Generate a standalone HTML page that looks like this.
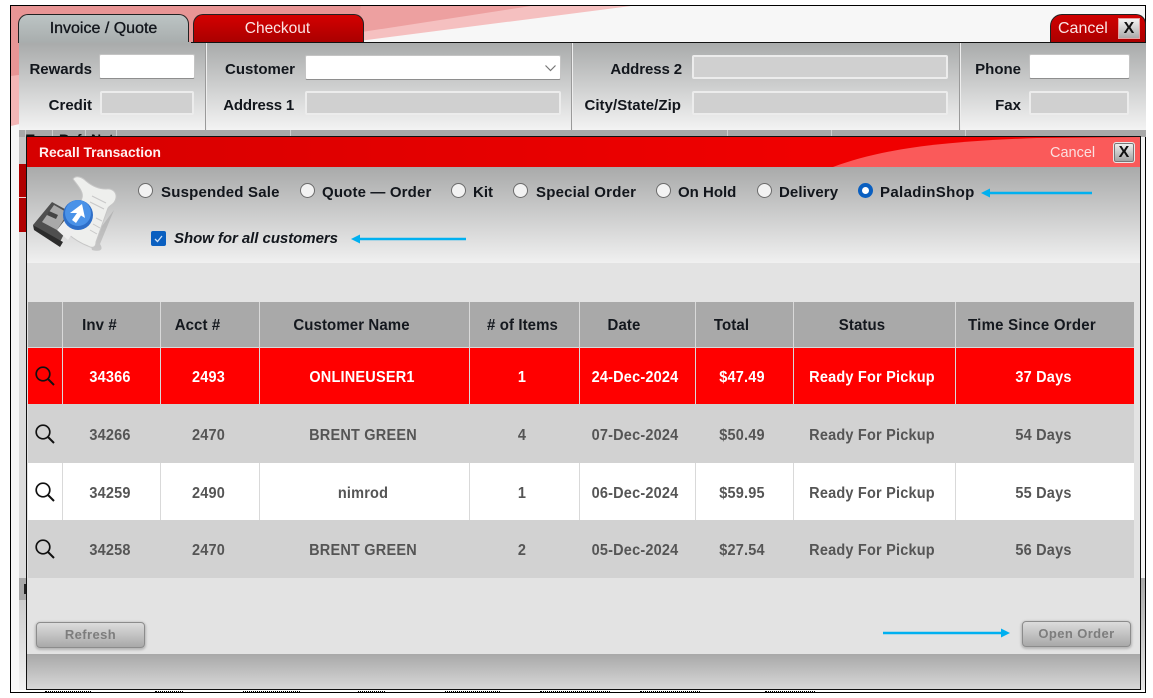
<!DOCTYPE html>
<html>
<head>
<meta charset="utf-8">
<style>
html,body{margin:0;padding:0;width:1153px;height:698px;overflow:hidden;background:#fff;}
*{box-sizing:border-box;}
body{font-family:"Liberation Sans",Arial,sans-serif;position:relative;}
.a{position:absolute;}
.t{position:absolute;white-space:nowrap;font-weight:bold;color:#12161c;font-size:15px;line-height:18px;}
.r{text-align:right;}
.c{text-align:center;}
.inp{position:absolute;height:25px;background:#fff;border:1px solid #c4c4c4;border-bottom:1px solid #8e8e8e;border-radius:2px;}
.dis{position:absolute;height:24px;background:#d0d0d0;border:2px solid #ececec;border-radius:2px;}
.rad{position:absolute;width:15px;height:15px;border-radius:50%;background:#f2f2f2;border:1.5px solid #6b6b6b;}
.row{position:absolute;left:28px;width:1106px;}
.sep{position:absolute;top:302px;width:1px;height:276px;background:#d9d9d9;}
.cell{position:absolute;white-space:nowrap;font-weight:bold;font-size:14.5px;line-height:18px;text-align:center;color:#555;letter-spacing:.2px;transform:scaleY(1.06);}
.h{color:#14181e;font-size:15px;letter-spacing:.1px;}
.w{color:#fff;}
.btn{position:absolute;height:26px;border:1px solid #8c8c8c;border-radius:4px;background:linear-gradient(#dcdcdc,#a9a9a9);box-shadow:0 1px 2px 1px #b5b5b5;color:#7d7d7d;font-weight:bold;font-size:13px;line-height:24px;text-align:center;letter-spacing:.4px;}
.d{position:absolute;top:691px;height:1px;border-top:1px dotted #000;}
</style>
</head>
<body>
<!-- outer frame -->
<div class="a" style="left:10px;top:5px;width:1136px;height:688px;border:1px solid #000;background:#f7f7f7;overflow:hidden;">
  <svg class="a" style="left:0;top:0" width="1135" height="140">
    <polygon points="0,0 620,0 340,36 0,95" fill="#f5c0c0"/>
    <polygon points="0,0 520,0 0,80" fill="#eda0a0"/>
    <polygon points="0,0 350,0 345,25 0,70" fill="#e89595"/>
    <polygon points="0,70 350,25 350,37 0,120" fill="#f3b6b6"/>
  </svg>
</div>
<!-- tabs -->
<div class="a" style="left:18px;top:14px;width:171px;height:29px;border:1px solid #222;border-bottom:none;border-radius:10px 10px 0 0;background:linear-gradient(#bcc4c4,#a8adad);"></div>
<div class="t c" style="left:18px;top:20px;width:171px;font-weight:normal;font-size:16px;-webkit-text-stroke:.35px #12161c;">Invoice / Quote</div>
<div class="a" style="left:193px;top:14px;width:171px;height:29px;border:1px solid #222;border-bottom:none;border-radius:10px 10px 0 0;background:linear-gradient(#d40000,#a80000);"></div>
<div class="t c" style="left:192px;top:20px;width:171px;font-weight:normal;font-size:15.5px;color:#fbe4e4;">Checkout</div>
<div class="a" style="left:1050px;top:14px;width:96px;height:29px;border:1px solid #222;border-bottom:none;border-radius:12px 10px 0 0;background:linear-gradient(#d00000,#aa0000);"></div>
<div class="t" style="left:1058px;top:20px;font-weight:normal;font-size:16px;color:#fbe4e4;">Cancel</div>
<div class="a" style="left:1118px;top:18px;width:22px;height:21px;border:1px solid #e8a0a0;background:linear-gradient(#f4f4f4,#aaa);color:#111;font-weight:bold;font-size:16px;line-height:19px;text-align:center;">X</div>

<!-- header panel -->
<div class="a" style="left:19px;top:42px;width:1127px;height:88px;border-top:1px solid #111;background:linear-gradient(#a9abab,#f3f3f3);"></div>
<div class="a" style="left:19px;top:42px;width:172px;height:1px;background:#a9adad;"></div>
<div class="a" style="left:205px;top:43px;width:1px;height:87px;background:#9a9a9a;box-shadow:1px 0 0 #eee;"></div>
<div class="a" style="left:571px;top:43px;width:1px;height:87px;background:#9a9a9a;box-shadow:1px 0 0 #eee;"></div>
<div class="a" style="left:959px;top:43px;width:1px;height:87px;background:#9a9a9a;box-shadow:1px 0 0 #eee;"></div>

<div class="t r" style="left:19px;top:61px;width:73px;">Rewards</div>
<div class="inp" style="left:99px;top:54px;width:96px;"></div>
<div class="t r" style="left:19px;top:97px;width:73px;">Credit</div>
<div class="dis" style="left:100px;top:91px;width:94px;"></div>

<div class="t r" style="left:210px;top:61px;width:85px;">Customer</div>
<div class="inp" style="left:305px;top:55px;width:256px;"></div>
<svg class="a" style="left:544px;top:64px" width="14" height="9"><path d="M1.5 1.5 L6.5 6.5 L11.5 1.5" fill="none" stroke="#777" stroke-width="1.2"/></svg>
<div class="t r" style="left:210px;top:97px;width:84px;letter-spacing:-.2px;">Address 1</div>
<div class="dis" style="left:305px;top:91px;width:256px;"></div>

<div class="t r" style="left:580px;top:61px;width:102px;letter-spacing:-.1px;">Address 2</div>
<div class="dis" style="left:692px;top:55px;width:256px;"></div>
<div class="t r" style="left:574px;top:97px;width:107px;letter-spacing:.05px;">City/State/Zip</div>
<div class="dis" style="left:692px;top:91px;width:256px;"></div>

<div class="t r" style="left:960px;top:61px;width:61px;">Phone</div>
<div class="inp" style="left:1029px;top:54px;width:101px;"></div>
<div class="t r" style="left:960px;top:97px;width:61px;">Fax</div>
<div class="dis" style="left:1029px;top:91px;width:100px;"></div>

<!-- strip under header -->
<div class="a" style="left:19px;top:130px;width:1127px;height:7px;background:#a8a8a8;overflow:hidden;">
  <div class="a" style="left:6px;top:0;width:1px;height:7px;background:#ccc;"></div>
  <div class="a" style="left:33px;top:0;width:1px;height:7px;background:#ccc;"></div>
  <div class="a" style="left:66px;top:0;width:1px;height:7px;background:#ccc;"></div>
  <div class="a" style="left:97px;top:0;width:1px;height:7px;background:#ccc;"></div>
  <div class="a" style="left:271px;top:0;width:1px;height:7px;background:#ccc;"></div>
  <div class="a" style="left:708px;top:0;width:1px;height:7px;background:#ccc;"></div>
  <div class="a" style="left:812px;top:0;width:1px;height:7px;background:#ccc;"></div>
  <div class="a" style="left:946px;top:0;width:1px;height:7px;background:#ccc;"></div>
  <div class="a" style="left:7px;top:2px;font-size:14px;font-weight:bold;color:#111;line-height:14px;letter-spacing:.5px;">Ty</div>
  <div class="a" style="left:40px;top:2px;font-size:14px;font-weight:bold;color:#111;line-height:14px;">Ref</div>
  <div class="a" style="left:72px;top:2px;font-size:14px;font-weight:bold;color:#111;line-height:14px;">Net</div>
</div>
<!-- left strip -->
<div class="a" style="left:19px;top:137px;width:7px;height:555px;background:#dcdcdc;"></div>
<div class="a" style="left:19px;top:137px;width:7px;height:27px;background:#c4c4c4;"></div>
<div class="a" style="left:19px;top:164px;width:7px;height:68px;background:#b00000;"></div>
<div class="a" style="left:19px;top:197px;width:7px;height:1px;background:#f0d0d0;"></div>
<div class="a" style="left:19px;top:578px;width:7px;height:22px;background:#a8a8a8;"></div>
<div class="a" style="left:24px;top:584px;width:2px;height:10px;background:#222;"></div>
<div class="a" style="left:19px;top:600px;width:7px;height:90px;background:linear-gradient(#cdcdcd,#f2f2f2);"></div>
<div class="a" style="left:1141px;top:137px;width:4px;height:441px;background:#f2f2f2;"></div>
<div class="a" style="left:1141px;top:578px;width:4px;height:112px;background:linear-gradient(#a9a9a9,#e6e6e6);"></div>

<!-- remnants along the bottom edge -->
<div class="a" style="left:11px;top:690px;width:1134px;height:2px;background:#fff;"></div>
<div class="d" style="left:45px;width:46px;"></div>
<div class="d" style="left:155px;width:28px;"></div>
<div class="d" style="left:243px;width:57px;"></div>
<div class="d" style="left:358px;width:27px;"></div>
<div class="d" style="left:445px;width:55px;"></div>
<div class="d" style="left:540px;width:70px;"></div>
<div class="d" style="left:640px;width:60px;"></div>
<div class="d" style="left:765px;width:50px;"></div>

<!-- modal -->
<div class="a" style="left:26px;top:136px;width:1115px;height:554px;border:1px solid #111;background:#e3e3e3;overflow:hidden;">
  <div class="a" style="left:0;top:0;width:1113px;height:30px;background:linear-gradient(90deg,#d60000 0%,#f00000 70%);"></div>
  <svg class="a" style="left:0;top:0" width="1113" height="30"><path d="M806 30 C850 14 900 5 1010 1 L1113 0 L1113 30 Z" fill="#fa5a5a"/></svg>
  <div class="a" style="left:0;top:30px;width:1113px;height:96px;background:linear-gradient(#a9aaaa,#f0f0f0);"></div>
  <div class="a" style="left:0;top:517px;width:1113px;height:36px;background:linear-gradient(#a8a8a8,#d9d9d9);"></div>
</div>
<div class="t" style="left:39px;top:144px;font-size:13.8px;color:#fff0f0;">Recall Transaction</div>
<div class="t" style="left:1050px;top:144px;font-weight:normal;font-size:14.5px;color:#fbe0e0;">Cancel</div>
<div class="a" style="left:1113px;top:142px;width:22px;height:21px;border:1px solid #e8e8e8;border-radius:3px;background:linear-gradient(#f2f2f2,#a0a0a0);box-shadow:inset 0 0 0 1px #777;color:#111;font-weight:bold;font-size:16px;line-height:19px;text-align:center;">X</div>

<!-- modal icon -->
<svg class="a" style="left:30px;top:172px" width="92" height="84" viewBox="0 0 92 84">
  <path d="M62 78 C70 80 74 78 70 72 L84 38 L60 70 Z" fill="#8a8a8a" opacity=".35"/>
  <path d="M43 7 C46 3 52 5 56 9 C62 14 68 17 76 17 C82 16 87 20 86 26 C85 32 80 33 78 36 L66 70 C66 75 63 77 58 74 C50 71 44 67 38 62 L52 26 C54 20 48 14 43 7 Z" fill="#eeefed" stroke="#c6c6c6" stroke-width="1"/>
  <path d="M62 24 L76 31 M60 30 L74 37 M66 46 L72 49 M63 52 L70 56 M60 58 L67 62" stroke="#c8c8c8" stroke-width="1"/>
  <path d="M3 53 L22 30 L44 42 L30 70 Z" fill="#4f4f4f"/>
  <path d="M3 53 L4 58 L30 75 L33 70 Z" fill="#2c2c2c"/>
  <path d="M12 50 L24 33 L38 41 L27 58 Z" fill="#a9a9a9"/>
  <path d="M19 39 L28 43 L26 47 L17 43 Z" fill="#444"/>
  <path d="M27 58 L38 44 L50 50 L38 68 Z" fill="#eeeeee"/>
  <circle cx="48" cy="43" r="15" fill="#2f6fc8"/>
  <circle cx="48" cy="41" r="13" fill="#4a92e8"/>
  <path d="M40 41 L52 32 L55 46 L51 43.5 L46 51 L42 48 L47 41 Z" fill="#fff"/>
</svg>

<!-- radios -->
<div class="rad" style="left:138px;top:183px;"></div>
<div class="t" style="left:161px;top:184px;letter-spacing:.2px;">Suspended Sale</div>
<div class="rad" style="left:300px;top:183px;"></div>
<div class="t" style="left:322px;top:184px;letter-spacing:.15px;">Quote — Order</div>
<div class="rad" style="left:451px;top:183px;"></div>
<div class="t" style="left:473px;top:184px;">Kit</div>
<div class="rad" style="left:513px;top:183px;"></div>
<div class="t" style="left:536px;top:184px;letter-spacing:.2px;">Special Order</div>
<div class="rad" style="left:656px;top:183px;"></div>
<div class="t" style="left:678px;top:184px;">On Hold</div>
<div class="rad" style="left:757px;top:183px;"></div>
<div class="t" style="left:779px;top:184px;letter-spacing:.1px;">Delivery</div>
<div class="a" style="left:858px;top:183px;width:15px;height:15px;border-radius:50%;background:#fff;border:4px solid #0a5fc0;"></div>
<div class="t" style="left:880px;top:184px;letter-spacing:.35px;">PaladinShop</div>

<svg class="a" style="left:980px;top:186px" width="114" height="14"><path d="M112 7 L8 7" stroke="#00b0f0" stroke-width="2.6"/><path d="M1 7 L10 2.5 L10 11.5 Z" fill="#00b0f0"/></svg>

<!-- checkbox -->
<div class="a" style="left:151px;top:231px;width:15px;height:15px;border-radius:2px;background:#0a5fc0;"></div>
<svg class="a" style="left:151px;top:231px" width="15" height="15"><path d="M4 8 L6.5 10.5 L11 5" fill="none" stroke="#cfe2f8" stroke-width="1.3"/></svg>
<div class="t" style="left:174px;top:230px;font-style:italic;letter-spacing:-.05px;">Show for all customers</div>
<svg class="a" style="left:350px;top:232px" width="118" height="14"><path d="M116 7 L8 7" stroke="#00b0f0" stroke-width="2.6"/><path d="M1 7 L10 2.5 L10 11.5 Z" fill="#00b0f0"/></svg>

<!-- table -->
<div class="row" style="top:302px;height:45px;background:#a9a9a9;"></div>
<div class="row" style="top:347px;height:1px;background:#d9d9d9;"></div>
<div class="row" style="top:348px;height:56px;background:#ff0000;"></div>
<div class="row" style="top:404px;height:59px;background:#d2d2d2;"></div>
<div class="row" style="top:463px;height:57px;background:#ffffff;"></div>
<div class="row" style="top:520px;height:58px;background:#d2d2d2;"></div>

<div class="sep" style="left:62px;height:102px;"></div>
<div class="sep" style="left:160px;height:102px;"></div>
<div class="sep" style="left:259px;height:102px;"></div>
<div class="sep" style="left:469px;height:102px;"></div>
<div class="sep" style="left:579px;height:102px;"></div>
<div class="sep" style="left:695px;height:102px;"></div>
<div class="sep" style="left:793px;height:102px;"></div>
<div class="sep" style="left:955px;height:102px;"></div>
<div class="sep" style="left:62px;top:463px;height:57px;"></div>
<div class="sep" style="left:160px;top:463px;height:57px;"></div>
<div class="sep" style="left:259px;top:463px;height:57px;"></div>
<div class="sep" style="left:469px;top:463px;height:57px;"></div>
<div class="sep" style="left:579px;top:463px;height:57px;"></div>
<div class="sep" style="left:695px;top:463px;height:57px;"></div>
<div class="sep" style="left:793px;top:463px;height:57px;"></div>
<div class="sep" style="left:955px;top:463px;height:57px;"></div>

<!-- header cells -->
<div class="cell h" style="left:62px;top:317px;width:75px;">Inv #</div>
<div class="cell h" style="left:160px;top:317px;width:75px;">Acct #</div>
<div class="cell h" style="left:259px;top:317px;width:185px;">Customer Name</div>
<div class="cell h" style="left:469px;top:317px;width:107px;">&#35; of Items</div>
<div class="cell h" style="left:579px;top:317px;width:90px;">Date</div>
<div class="cell h" style="left:695px;top:317px;width:73px;">Total</div>
<div class="cell h" style="left:793px;top:317px;width:138px;">Status</div>
<div class="cell h" style="left:955px;top:317px;width:154px;letter-spacing:.25px;">Time Since Order</div>

<!-- row 1 -->
<div class="cell w" style="left:61px;top:369px;width:98px;">34366</div>
<div class="cell w" style="left:159px;top:369px;width:99px;">2493</div>
<div class="cell w" style="left:257px;top:369px;width:210px;">ONLINEUSER1</div>
<div class="cell w" style="left:467px;top:369px;width:110px;">1</div>
<div class="cell w" style="left:579px;top:369px;width:112px;">24-Dec-2024</div>
<div class="cell w" style="left:693px;top:369px;width:98px;">$47.49</div>
<div class="cell w" style="left:793px;top:369px;width:158px;">Ready For Pickup</div>
<div class="cell w" style="left:955px;top:369px;width:177px;">37 Days</div>
<!-- row 2 -->
<div class="cell" style="left:61px;top:427px;width:98px;">34266</div>
<div class="cell" style="left:159px;top:427px;width:99px;">2470</div>
<div class="cell" style="left:258px;top:427px;width:210px;">BRENT GREEN</div>
<div class="cell" style="left:467px;top:427px;width:110px;">4</div>
<div class="cell" style="left:579px;top:427px;width:112px;">07-Dec-2024</div>
<div class="cell" style="left:693px;top:427px;width:98px;">$50.49</div>
<div class="cell" style="left:793px;top:427px;width:158px;">Ready For Pickup</div>
<div class="cell" style="left:955px;top:427px;width:177px;">54 Days</div>
<!-- row 3 -->
<div class="cell" style="left:61px;top:485px;width:98px;">34259</div>
<div class="cell" style="left:159px;top:485px;width:99px;">2490</div>
<div class="cell" style="left:258px;top:485px;width:210px;">nimrod</div>
<div class="cell" style="left:467px;top:485px;width:110px;">1</div>
<div class="cell" style="left:579px;top:485px;width:112px;">06-Dec-2024</div>
<div class="cell" style="left:693px;top:485px;width:98px;">$59.95</div>
<div class="cell" style="left:793px;top:485px;width:158px;">Ready For Pickup</div>
<div class="cell" style="left:955px;top:485px;width:177px;">55 Days</div>
<!-- row 4 -->
<div class="cell" style="left:61px;top:542px;width:98px;">34258</div>
<div class="cell" style="left:159px;top:542px;width:99px;">2470</div>
<div class="cell" style="left:258px;top:542px;width:210px;">BRENT GREEN</div>
<div class="cell" style="left:467px;top:542px;width:110px;">2</div>
<div class="cell" style="left:579px;top:542px;width:112px;">05-Dec-2024</div>
<div class="cell" style="left:693px;top:542px;width:98px;">$27.54</div>
<div class="cell" style="left:793px;top:542px;width:158px;">Ready For Pickup</div>
<div class="cell" style="left:955px;top:542px;width:177px;">56 Days</div>

<!-- search icons -->
<svg class="a" style="left:34px;top:365px" width="22" height="22"><circle cx="9" cy="9" r="6.8" fill="none" stroke="#111" stroke-width="1.7"/><path d="M14 14 L20 20" stroke="#111" stroke-width="2"/></svg>
<svg class="a" style="left:34px;top:423px" width="22" height="22"><circle cx="9" cy="9" r="6.8" fill="none" stroke="#111" stroke-width="1.7"/><path d="M14 14 L20 20" stroke="#111" stroke-width="2"/></svg>
<svg class="a" style="left:34px;top:481px" width="22" height="22"><circle cx="9" cy="9" r="6.8" fill="none" stroke="#111" stroke-width="1.7"/><path d="M14 14 L20 20" stroke="#111" stroke-width="2"/></svg>
<svg class="a" style="left:34px;top:538px" width="22" height="22"><circle cx="9" cy="9" r="6.8" fill="none" stroke="#111" stroke-width="1.7"/><path d="M14 14 L20 20" stroke="#111" stroke-width="2"/></svg>

<!-- buttons -->
<div class="btn" style="left:36px;top:622px;width:109px;">Refresh</div>
<div class="btn" style="left:1022px;top:621px;width:109px;">Open Order</div>
<svg class="a" style="left:882px;top:626px" width="130" height="14"><path d="M1 7 L120 7" stroke="#00b0f0" stroke-width="2.6"/><path d="M128 7 L119 2.5 L119 11.5 Z" fill="#00b0f0"/></svg>
</body>
</html>
